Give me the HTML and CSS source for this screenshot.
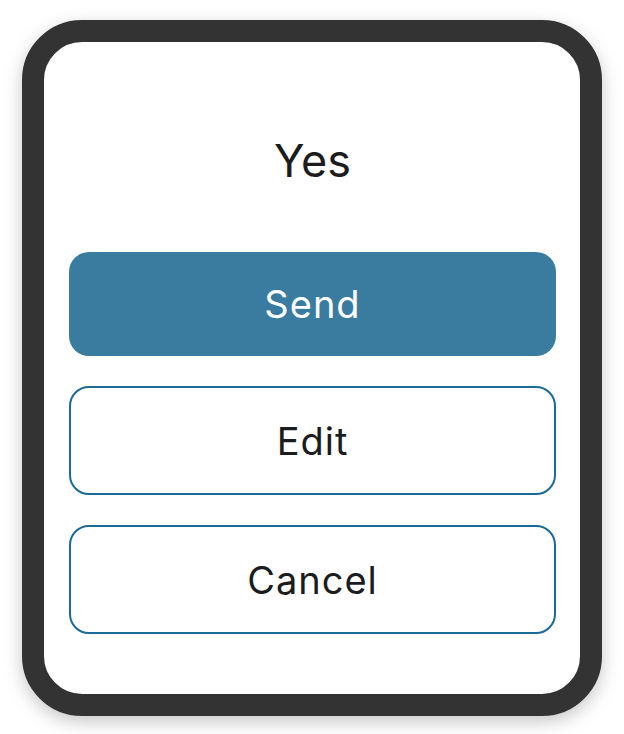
FILE: index.html
```html
<!DOCTYPE html>
<html lang="en">
<head>
<meta charset="utf-8">
<title>Yes</title>
<link rel="stylesheet" href="styles.css">
</head>
<body>
<div class="page">
  <div class="watch">
    <div class="screen">
      <div class="title">Yes</div>
      <div class="actions">
        <button class="btn btn-primary">Send</button>
        <button class="btn btn-outline">Edit</button>
        <button class="btn btn-outline">Cancel</button>
      </div>
    </div>
  </div>
</div>
</body>
</html>
```
FILE: styles.css
```css
html, body {
  margin: 0;
  padding: 0;
  background: #ffffff;
}
.page {
  width: 624px;
  height: 734px;
  padding: 20px 22px 18px;
  box-sizing: border-box;
  font-family: Inter, "Liberation Sans", sans-serif;
}
.watch {
  width: 580px;
  height: 696px;
  box-sizing: border-box;
  border: 22px solid #333333;
  border-radius: 60px;
  background: #ffffff;
  box-shadow: 0 6px 18px rgba(0, 0, 0, 0.22);
  overflow: hidden;
}
.screen {
  display: flex;
  flex-direction: column;
  padding: 92px 24px 0 25px;
}
.title {
  height: 54px;
  line-height: 54px;
  text-align: center;
  font-size: 45px;
  color: #1c1c1e;
  margin-bottom: 64px;
}
.actions {
  display: flex;
  flex-direction: column;
  gap: 30px;
}
.btn {
  font-family: Inter, "Liberation Sans", sans-serif;
  font-size: 38px;
  font-weight: 400;
  letter-spacing: 1px;
  border-radius: 20px;
  box-sizing: border-box;
  width: 100%;
  margin: 0;
  padding: 0;
  cursor: pointer;
}
.btn-primary {
  height: 104px;
  background: #3a7ca0;
  color: #ffffff;
  border: none;
}
.btn-outline {
  height: 109px;
  background: #ffffff;
  color: #1c1c1e;
  border: 2px solid #1b6a98;
}
```
